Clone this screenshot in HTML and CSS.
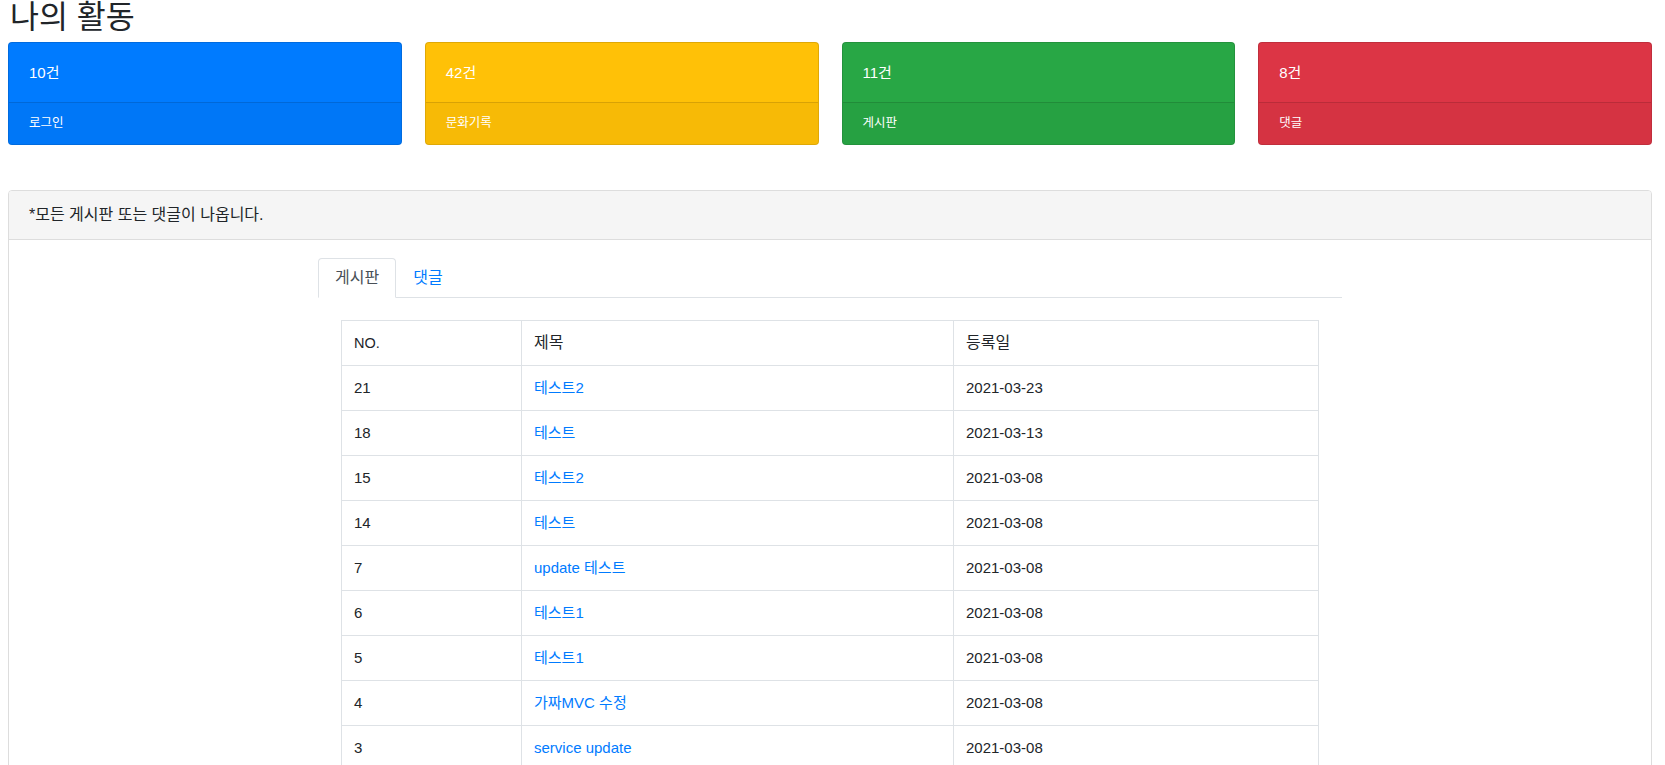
FILE: index.html
```html
<!DOCTYPE html>
<html lang="ko">
<head>
<meta charset="utf-8">
<title>나의 활동</title>
<link rel="stylesheet" href="styles.css">
</head>
<body>
<div class="page">
  <h3 class="page-title">나의 활동</h3>

  <div class="stats">
    <div class="stat stat-blue">
      <div class="stat-body">10건</div>
      <div class="stat-footer">로그인</div>
    </div>
    <div class="stat stat-yellow">
      <div class="stat-body">42건</div>
      <div class="stat-footer">문화기록</div>
    </div>
    <div class="stat stat-green">
      <div class="stat-body">11건</div>
      <div class="stat-footer">게시판</div>
    </div>
    <div class="stat stat-red">
      <div class="stat-body">8건</div>
      <div class="stat-footer">댓글</div>
    </div>
  </div>

  <div class="panel">
    <div class="panel-heading">*모든 게시판 또는 댓글이 나옵니다.</div>
    <div class="panel-body">
      <div class="tabs-wrap">
        <ul class="tabs">
          <li class="tab active">게시판</li>
          <li class="tab"><a href="#">댓글</a></li>
        </ul>
        <table class="board">
          <colgroup>
            <col class="c-no">
            <col class="c-title">
            <col class="c-date">
          </colgroup>
          <thead>
            <tr><th class="th-no">NO.</th><th>제목</th><th>등록일</th></tr>
          </thead>
          <tbody>
            <tr><td>21</td><td><a href="#">테스트2</a></td><td>2021-03-23</td></tr>
            <tr><td>18</td><td><a href="#">테스트</a></td><td>2021-03-13</td></tr>
            <tr><td>15</td><td><a href="#">테스트2</a></td><td>2021-03-08</td></tr>
            <tr><td>14</td><td><a href="#">테스트</a></td><td>2021-03-08</td></tr>
            <tr><td>7</td><td><a href="#">update 테스트</a></td><td>2021-03-08</td></tr>
            <tr><td>6</td><td><a href="#">테스트1</a></td><td>2021-03-08</td></tr>
            <tr><td>5</td><td><a href="#">테스트1</a></td><td>2021-03-08</td></tr>
            <tr><td>4</td><td><a href="#">가짜MVC 수정</a></td><td>2021-03-08</td></tr>
            <tr><td>3</td><td><a href="#">service update</a></td><td>2021-03-08</td></tr>
          </tbody>
        </table>
      </div>
    </div>
  </div>
</div>
</body>
</html>
```

FILE: styles.css
```css
* { box-sizing: border-box; }

html, body {
  margin: 0;
  padding: 0;
  background: #fff;
}

body {
  font-family: "Liberation Sans", "Noto Sans CJK KR", sans-serif;
  font-size: 15px;
  line-height: 1.5;
  color: #212529;
}

a {
  color: #007bff;
  text-decoration: none;
}

.page {
  padding: 0 13px 0 8px;
}

.page-title {
  margin: 0 0 8px 0;
  padding-left: 2px;
  font-size: 31.5px;
  font-weight: 400;
  line-height: 34px;
}

.stats {
  display: grid;
  grid-template-columns: repeat(4, 1fr);
  gap: 23px;
  margin-bottom: 45px;
}

.stat {
  border: 1px solid rgba(0, 0, 0, 0.125);
  border-radius: 4px;
  color: #fff;
  overflow: hidden;
}

.stat-blue { background: #007bff; }
.stat-yellow { background: #ffc107; }
.stat-green { background: #28a745; }
.stat-red { background: #dc3545; }

.stat-body {
  padding: 18px 20px;
  line-height: 23px;
  font-size: 15px;
}

.stat-footer {
  border-top: 1px solid rgba(0, 0, 0, 0.125);
  background: rgba(0, 0, 0, 0.03);
  padding: 11px 20px;
  font-size: 12.5px;
  line-height: 19px;
}

.panel {
  border: 1px solid #ddd;
  border-radius: 4px;
}

.panel-heading {
  background: #f5f5f5;
  border-bottom: 1px solid #ddd;
  padding: 12px 20px;
  font-size: 16px;
  line-height: 24px;
  border-radius: 3px 3px 0 0;
}

.panel-body {
  padding: 18px 0 0 0;
}

.tabs-wrap {
  width: 1024px;
  margin: 0 auto;
}

.tabs {
  display: flex;
  list-style: none;
  margin: 0;
  padding: 0;
  border-bottom: 1px solid #dee2e6;
  font-size: 16px;
}

.tab {
  margin-bottom: -1px;
  padding: 8px 16px;
  line-height: 22px;
  border: 1px solid transparent;
  border-radius: 4px 4px 0 0;
}

.tab.active {
  color: #495057;
  background: #fff;
  border-color: #dee2e6 #dee2e6 #fff;
}

.board {
  width: 977px;
  margin: 22px auto 0;
  border-collapse: collapse;
  table-layout: fixed;
}

.c-no { width: 180px; }
.c-title { width: 432px; }
.c-date { width: 365px; }

.board th,
.board td {
  border: 1px solid #dee2e6;
  padding: 12px 12px;
  line-height: 20px;
  text-align: left;
  font-weight: 400;
  vertical-align: top;
}

.board th {
  font-size: 16px;
}

.board th.th-no {
  font-size: 14.5px;
}
```
